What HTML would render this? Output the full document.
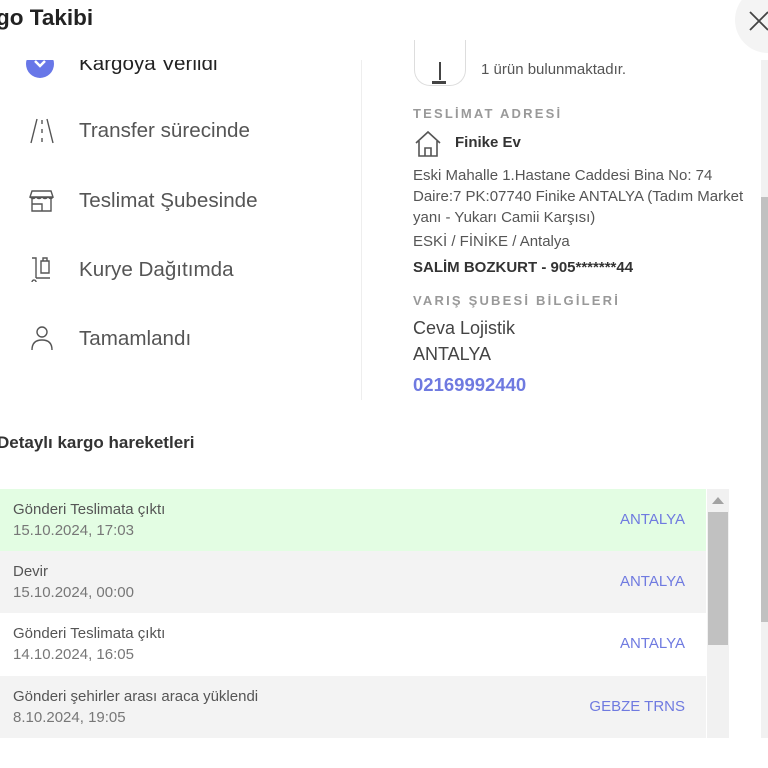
<!DOCTYPE html>
<html><head><meta charset="utf-8"><style>
*{margin:0;padding:0;box-sizing:border-box}
body{width:768px;height:768px;overflow:hidden;background:#fff;font-family:"Liberation Sans",sans-serif;position:relative;color:#333}
.a{position:absolute;white-space:nowrap}
.step{font-size:20.6px;color:#555;left:79px}
.lbl{font-size:13px;letter-spacing:2.2px;color:#999;font-weight:bold;left:413px}
.row{position:absolute;left:0;width:706px;height:62px}
.row .t{position:absolute;left:13px;top:12px;font-size:15px;color:#555}
.row .d{position:absolute;left:13px;top:33px;font-size:15px;color:#777}
.row .c{position:absolute;right:21px;top:22px;font-size:15px;color:#6f7ae0}
</style></head><body>
<div class="a" style="left:26px;top:50px;width:28px;height:28px;border-radius:50%;background:#6877e8"></div>
<svg class="a" style="left:32px;top:56px" width="16" height="14"><path d="M3 5l5 5 5-5" stroke="#fff" stroke-width="2.5" fill="none"/></svg>
<div class="a step" style="top:52px;color:#222">Kargoya Verildi</div>
<div class="a" style="left:0;top:0;width:768px;height:60px;background:#fff"></div>
<div class="a" style="left:-4px;top:5px;font-size:22.5px;font-weight:bold;color:#222">go Takibi</div>
<div class="a" style="left:735px;top:-13px;width:66px;height:66px;border-radius:50%;background:#f4f4f4"></div>
<svg class="a" style="left:748px;top:10px" width="22" height="22"><path d="M2 2L20 20M20 2L2 20" stroke="#444" stroke-width="1.8"/></svg>

<svg class="a" style="left:28px;top:117px" width="28" height="28" fill="none" stroke="#555" stroke-width="1.4"><path d="M9 2L3 26M19 2L25 26M14 3v4M14 12v4M14 21v4"/></svg>
<div class="a step" style="top:119px">Transfer sürecinde</div>
<svg class="a" style="left:28px;top:188px" width="28" height="26" fill="none" stroke="#555" stroke-width="1.4"><path d="M4 3h19l2 6H2zM2 9q3 3 6 0q3 3 6 0q3 3 6 0q3 3 5 0M4 11v12h19V11M4 16h10v7M14 16v7"/></svg>
<div class="a step" style="top:189px">Teslimat Şubesinde</div>
<svg class="a" style="left:30px;top:256px" width="24" height="26" fill="none" stroke="#555" stroke-width="1.4"><path d="M2 2h4v20M11 5h8v12h-8zM13 5V2h4v3M6 22h14M4 24a2 2 0 1 0 0.1 0"/></svg>
<div class="a step" style="top:258px">Kurye Dağıtımda</div>
<svg class="a" style="left:30px;top:325px" width="24" height="26" fill="none" stroke="#555" stroke-width="1.4"><circle cx="12" cy="7" r="5"/><path d="M2 25q0-10 10-10t10 10"/></svg>
<div class="a step" style="top:327px">Tamamlandı</div>

<div class="a" style="left:361px;top:60px;width:1px;height:340px;background:#eee"></div>

<div class="a" style="left:414px;top:40px;width:52px;height:46px;border:1px solid #ddd;border-top:none;border-radius:0 0 16px 16px"></div>
<div class="a" style="left:0;top:0;width:700px;height:60px;background:transparent"></div>
<div class="a" style="left:439px;top:62px;width:2px;height:18px;background:#444"></div>
<div class="a" style="left:432px;top:81px;width:14px;height:3px;background:#444"></div>
<div class="a" style="left:481px;top:61px;font-size:15px;color:#555">1 ürün bulunmaktadır.</div>
<div class="a lbl" style="top:106px">TESLİMAT ADRESİ</div>
<svg class="a" style="left:414px;top:130px" width="28" height="28" fill="none" stroke="#555" stroke-width="1.6"><path d="M2 13L14 2l12 11M5 11v15h18V11M11 26v-8h6v8"/></svg>
<div class="a" style="left:455px;top:134px;font-size:15px;font-weight:bold;color:#333">Finike Ev</div>
<div class="a" style="left:413px;top:165px;font-size:15px;color:#555;line-height:21px;white-space:normal;width:348px">Eski Mahalle 1.Hastane Caddesi Bina No: 74 Daire:7 PK:07740 Finike ANTALYA (Tadım Market yanı - Yukarı Camii Karşısı)</div>
<div class="a" style="left:413px;top:233px;font-size:15px;color:#555">ESKİ / FİNİKE / Antalya</div>
<div class="a" style="left:413px;top:259px;font-size:15px;font-weight:bold;color:#333">SALİM BOZKURT - 905*******44</div>
<div class="a lbl" style="top:293px">VARIŞ ŞUBESİ BİLGİLERİ</div>
<div class="a" style="left:413px;top:318px;font-size:18px;color:#444">Ceva Lojistik</div>
<div class="a" style="left:413px;top:344px;font-size:18px;color:#444">ANTALYA</div>
<div class="a" style="left:413px;top:374px;font-size:18.5px;font-weight:bold;color:#6f7ae0">02169992440</div>

<div class="a" style="left:-3px;top:433px;font-size:17px;font-weight:bold;color:#333">Detaylı kargo hareketleri</div>

<div class="row" style="top:489px;background:#e3fde3"><div class="t">Gönderi Teslimata çıktı</div><div class="d">15.10.2024, 17:03</div><div class="c">ANTALYA</div></div>
<div class="row" style="top:551px;background:#f3f3f3"><div class="t">Devir</div><div class="d">15.10.2024, 00:00</div><div class="c">ANTALYA</div></div>
<div class="row" style="top:613px;background:#fff"><div class="t">Gönderi Teslimata çıktı</div><div class="d">14.10.2024, 16:05</div><div class="c">ANTALYA</div></div>
<div class="row" style="top:676px;height:62px;background:#f3f3f3"><div class="t">Gönderi şehirler arası araca yüklendi</div><div class="d">8.10.2024, 19:05</div><div class="c">GEBZE TRNS</div></div>

<div class="a" style="left:707px;top:489px;width:22px;height:249px;background:#f1f1f1"></div>
<div class="a" style="left:712px;top:497px;width:0;height:0;border-left:6px solid transparent;border-right:6px solid transparent;border-bottom:7px solid #a3a3a3"></div>
<div class="a" style="left:708px;top:512px;width:20px;height:133px;background:#c1c1c1"></div>

<div class="a" style="left:761px;top:60px;width:7px;height:678px;background:#f1f1f1"></div>
<div class="a" style="left:761px;top:197px;width:7px;height:425px;background:#c1c1c1"></div>
</body></html>
